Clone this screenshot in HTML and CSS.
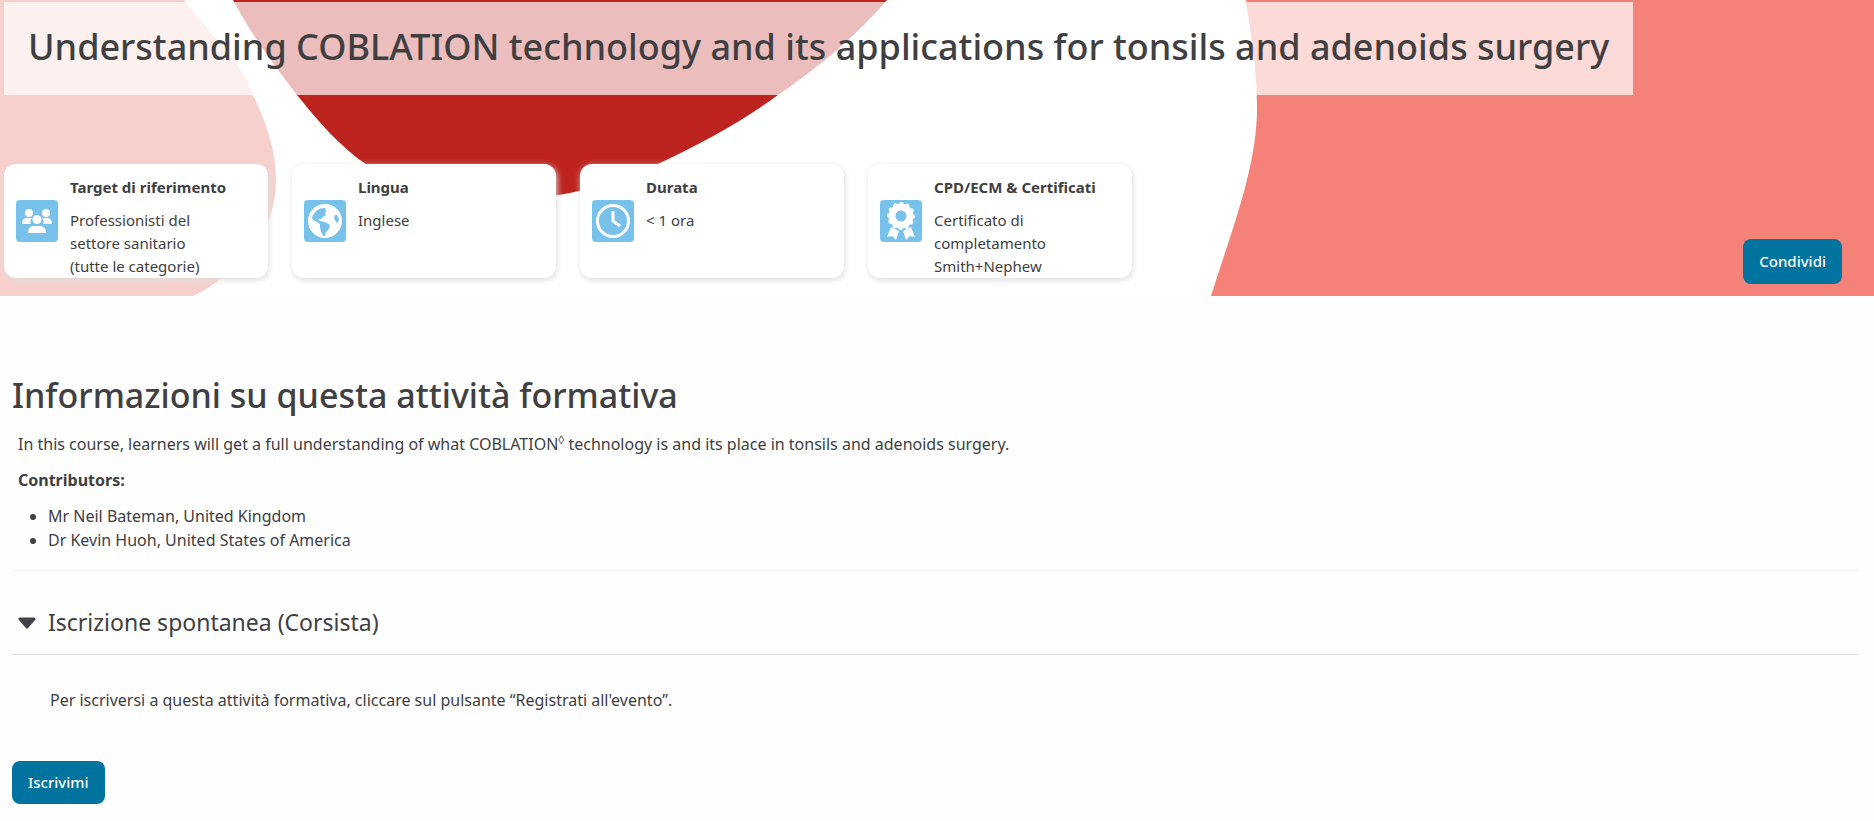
FILE: index.html
```html
<!DOCTYPE html>
<html lang="it">
<head>
    <meta charset="UTF-8">
    <meta name="viewport" content="width=device-width, initial-scale=1.0">
    <title>Understanding COBLATION technology</title>
    <link rel="stylesheet" href="styles.css">
</head>
<body>
    <header class="banner">
        <svg class="banner-bg" viewBox="0 0 1874 296" preserveAspectRatio="xMidYMid slice" aria-hidden="true">
            <path fill="#f7d0cd" d="M0 0H184C198 18 210 32 222 45C237 62 247 80 253 95C267 124 276 152 276 180C276 218 257 254 218 281C210 287 202 292 193 296H0Z"/>
            <path fill="#bd2420" d="M233 0C251 34 272 62 297 95C319 122 339 146 367 165C408 196 465 205 530 199C575 194 615 184 660 163C702 143 740 123 778 95C822 65 858 34 887 0Z"/>
            <path fill="#f58278" d="M1246 0C1250 32 1257 64 1257 108C1257 168 1231 232 1211 296H1874V0Z"/>
        </svg>
        <h1>Understanding COBLATION technology and its applications for tonsils and adenoids surgery</h1>
        <div class="banner-bottom">
            <div class="cards">
                <section class="card">
                    <svg class="card-icon" viewBox="0 0 42 42" aria-hidden="true">
                        <g fill="#fff">
                            <circle cx="13" cy="13" r="4"/>
                            <circle cx="30" cy="13" r="4"/>
                            <path d="M6 24c0-4 2-6 5-6h5c-2 2-2 4-1 6ZM36 24c0-4-2-6-5-6h-5c2 2 2 4 1 6Z"/>
                            <circle cx="21" cy="19.500" r="4.500"/>
                            <path d="M12 33c0-5 3-7 6-7h6c3 0 6 2 6 7Z"/>
                        </g>
                    </svg>
                    <div class="card-text">
                        <h2>Target di riferimento</h2>
                        <p>Professionisti del settore sanitario (tutte le categorie)</p>
                    </div>
                </section>
                <section class="card">
                    <svg class="card-icon" viewBox="0 0 42 42" aria-hidden="true">
                        <circle cx="21" cy="21" r="17" fill="#fff"/>
                        <path fill="#78c1eb" d="M8 18C10 11 15 8 21 8l1 3-1 3 1 1-3 2-2 2-3 0 2 2 5 1 5 3-1 4-3 3-1 4h-2l-2-5-1-3v-4l-3-2-4-2ZM31 15l2 0 2 4-1 4-2-1-2-4Z"/>
                    </svg>
                    <div class="card-text">
                        <h2>Lingua</h2>
                        <p>Inglese</p>
                    </div>
                </section>
                <section class="card">
                    <svg class="card-icon" viewBox="0 0 42 42" aria-hidden="true">
                        <circle cx="21" cy="21" r="15.500" fill="none" stroke="#fff" stroke-width="3"/>
                        <path d="M21 11v10l7 5" fill="none" stroke="#fff" stroke-width="3"/>
                    </svg>
                    <div class="card-text">
                        <h2>Durata</h2>
                        <p>&lt; 1 ora</p>
                    </div>
                </section>
                <section class="card">
                    <svg class="card-icon" viewBox="0 0 42 42" aria-hidden="true">
                        <circle cx="21" cy="16" r="9" fill="none" stroke="#fff" stroke-width="7"/>
                        <circle cx="21" cy="16" r="12.500" fill="none" stroke="#fff" stroke-width="3" stroke-linecap="round" stroke-dasharray="1 5.500"/>
                        <path fill="#fff" d="M11 27l8 4-3 9-4-4-5 1ZM31 27l-8 4 3 9 4-4 5 1Z"/>
                    </svg>
                    <div class="card-text">
                        <h2>CPD/ECM &amp; Certificati</h2>
                        <p>Certificato di completamento Smith+Nephew</p>
                    </div>
                </section>
            </div>
            <button class="btn btn-share" type="button">Condividi</button>
        </div>
    </header>

    <main class="content">
        <h2 class="content-title">Informazioni su questa attività formativa</h2>
        <div class="summary">
            <p>In this course, learners will get a full understanding of what COBLATION<sup>◊</sup> technology is and its place in tonsils and adenoids surgery.</p>
            <p><strong>Contributors:</strong></p>
            <ul>
                <li>Mr Neil Bateman, United Kingdom</li>
                <li>Dr Kevin Huoh, United States of America</li>
            </ul>
        </div>
        <details class="enrol" open>
            <summary>
                <svg class="caret" viewBox="0 0 18 14" aria-hidden="true">
                    <path fill="#40434a" stroke="#40434a" stroke-width="3" stroke-linejoin="round" d="M2 3h14L9 11Z"/>
                </svg>
                Iscrizione spontanea (Corsista)
            </summary>
            <p>Per iscriversi a questa attività formativa, cliccare sul pulsante “Registrati all'evento”.</p>
        </details>
        <button class="btn" type="submit">Iscrivimi</button>
    </main>
</body>
</html>
```
FILE: styles.css
```css
* {
    margin: 0;
    padding: 0;
    box-sizing: border-box;
}

body {
    font-family: "Noto Sans", sans-serif;
    font-size: 16px;
    line-height: 24px;
    background: #fefefe;
    color: #404042;
}

.banner {
    position: relative;
    overflow: hidden;
    padding: 2px 32px 12px 4px;
    background: #fff;
}

/* decorative shapes behind the title and the cards */
.banner-bg {
    position: absolute;
    top: 0;
    left: 0;
    width: 100%;
    height: 100%;
}

.banner h1 {
    position: relative;
    width: fit-content;
    padding: 18px 24px 22px;
    background: rgba(255, 255, 255, 0.7);
    font-size: 36px;
    font-weight: 500;
    line-height: 53px;
}

.banner-bottom {
    position: relative;
    display: flex;
    justify-content: space-between;
    align-items: flex-end;
    margin-top: 69px;
}

.cards {
    display: flex;
    gap: 24px;
    padding-bottom: 6px;
}

.card {
    display: flex;
    align-items: flex-start;
    gap: 12px;
    width: 264px;
    padding: 11px 12px 0;
    background: #fff;
    border-radius: 12px;
    box-shadow: 1px 2px 6px #dcdcdc;
}

.card-icon {
    flex: none;
    width: 42px;
    height: 42px;
    margin-top: 25px;
    border-radius: 4px;
    background: #78c1eb;
}

.card h2 {
    margin-bottom: 10px;
    font-size: 15px;
    line-height: 24px;
    font-weight: 700;
    white-space: nowrap;
}

.card p {
    max-width: 142px;
    font-size: 15px;
    line-height: 23px;
}

.btn {
    padding: 10px 16px;
    border: 0;
    border-radius: 8px;
    background: #00739e;
    color: #fff;
    font-family: inherit;
    font-size: 15px;
    line-height: 23px;
    font-weight: 500;
    cursor: pointer;
}

.btn-share {
    padding: 11px 16px;
}

.content {
    padding: 78px 15px 16px 12px;
}

.content-title {
    font-size: 34px;
    line-height: 42px;
    font-weight: 500;
}

.summary {
    margin-top: 10px;
    padding: 6px 6px 18px;
    border-bottom: 1px solid #f2f2f3;
    border-radius: 4px;
}

.summary p {
    margin-bottom: 12px;
}

.summary sup {
    font-size: 12px;
    line-height: 0;
}

.summary ul {
    padding-left: 30px;
}

.enrol summary {
    display: flex;
    align-items: center;
    gap: 12px;
    padding: 35px 6px 15px;
    border-bottom: 1px solid #dcdddf;
    font-size: 23px;
    line-height: 33px;
    list-style: none;
    cursor: pointer;
}

.caret {
    width: 18px;
    height: 14px;
}

.enrol p {
    padding: 33px 38px 49px;
}
```
